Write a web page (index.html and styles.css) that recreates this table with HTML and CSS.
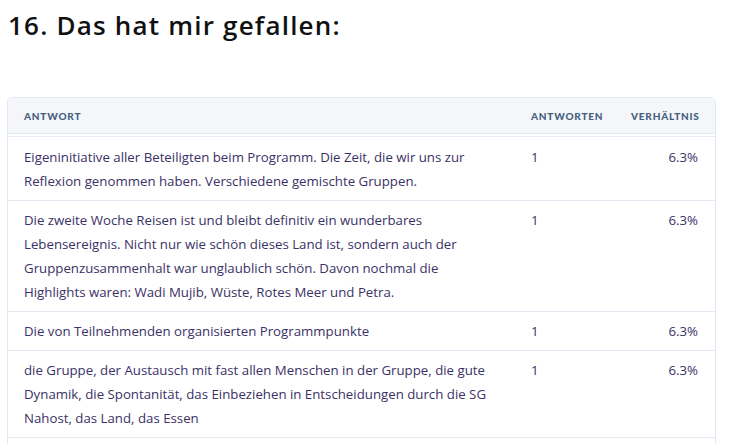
FILE: index.html
```html
<!DOCTYPE html>
<html lang="de">
<head>
<meta charset="utf-8">
<title>Das hat mir gefallen</title>
<link rel="stylesheet" href="styles.css">
</head>
<body>
<h1 class="title">16. Das hat mir gefallen:</h1>
<div class="table">
  <div class="row head">
    <div class="cell">ANTWORT</div>
    <div class="cell">ANTWORTEN</div>
    <div class="cell">VERHÄLTNIS</div>
  </div>
  <div class="row">
    <div class="cell">Eigeninitiative aller Beteiligten beim Programm. Die Zeit, die wir uns zur<br>Reflexion genommen haben. Verschiedene gemischte Gruppen.</div>
    <div class="cell">1</div>
    <div class="cell num">6.3%</div>
  </div>
  <div class="row">
    <div class="cell">Die zweite Woche Reisen ist und bleibt definitiv ein wunderbares<br>Lebensereignis. Nicht nur wie schön dieses Land ist, sondern auch der<br>Gruppenzusammenhalt war unglaublich schön. Davon nochmal die<br>Highlights waren: Wadi Mujib, Wüste, Rotes Meer und Petra.</div>
    <div class="cell">1</div>
    <div class="cell num">6.3%</div>
  </div>
  <div class="row">
    <div class="cell">Die von Teilnehmenden organisierten Programmpunkte</div>
    <div class="cell">1</div>
    <div class="cell num">6.3%</div>
  </div>
  <div class="row">
    <div class="cell">die Gruppe, der Austausch mit fast allen Menschen in der Gruppe, die gute<br>Dynamik, die Spontanität, das Einbeziehen in Entscheidungen durch die SG<br>Nahost, das Land, das Essen</div>
    <div class="cell">1</div>
    <div class="cell num">6.3%</div>
  </div>
  <div class="row">
    <div class="cell">&nbsp;</div>
    <div class="cell"></div>
    <div class="cell num"></div>
  </div>
</div>
</body>
</html>
```
FILE: styles.css
```css
html, body {
  margin: 0;
  padding: 0;
  background: #ffffff;
}
body {
  padding: 0 15px 0 7px;
  font-family: "Open Sans", "Liberation Sans", sans-serif;
  overflow: hidden;
  height: 444px;
  box-sizing: border-box;
}
.title {
  margin: 0;
  padding-top: 9px;
  height: 97px;
  box-sizing: border-box;
  font-size: 26px;
  line-height: 32px;
  font-weight: 600;
  letter-spacing: 1.2px;
  color: #111111;
  padding-left: 1px;
}
.table {
  border: 1px solid #e2e9f3;
  border-radius: 5px 5px 0 0;
  overflow: hidden;
}
.row {
  display: grid;
  grid-template-columns: 1fr 100px 100px;
  border-top: 1px solid #e2e9f3;
}
.row .cell {
  padding: 7px 16px;
  font-size: 13.25px;
  line-height: 24px;
  color: #3b3166;
}
.row .cell.num {
  text-align: right;
  padding-right: 17px;
}
.row.head {
  border-top: none;
  background: #f4f6f9;
  height: 36px;
  box-sizing: border-box;
  align-items: center;
  border-bottom: 1px solid #e2e9f3;
  box-shadow: 0 2px 0 #ffffff, 0 3px 0 #e4ebf6;
  margin-bottom: 3px;
}
.row.head .cell {
  font-family: "Lato", "Liberation Sans", sans-serif;
  font-size: 10px;
  font-weight: 900;
  letter-spacing: 0.8px;
  color: #45607f;
  padding: 0 0 0 16px;
  line-height: 14px;
  white-space: nowrap;
}
.row.head + .row {
  border-top: none;
}
.row.head + .row .cell {
  padding-top: 8px;
}
```
